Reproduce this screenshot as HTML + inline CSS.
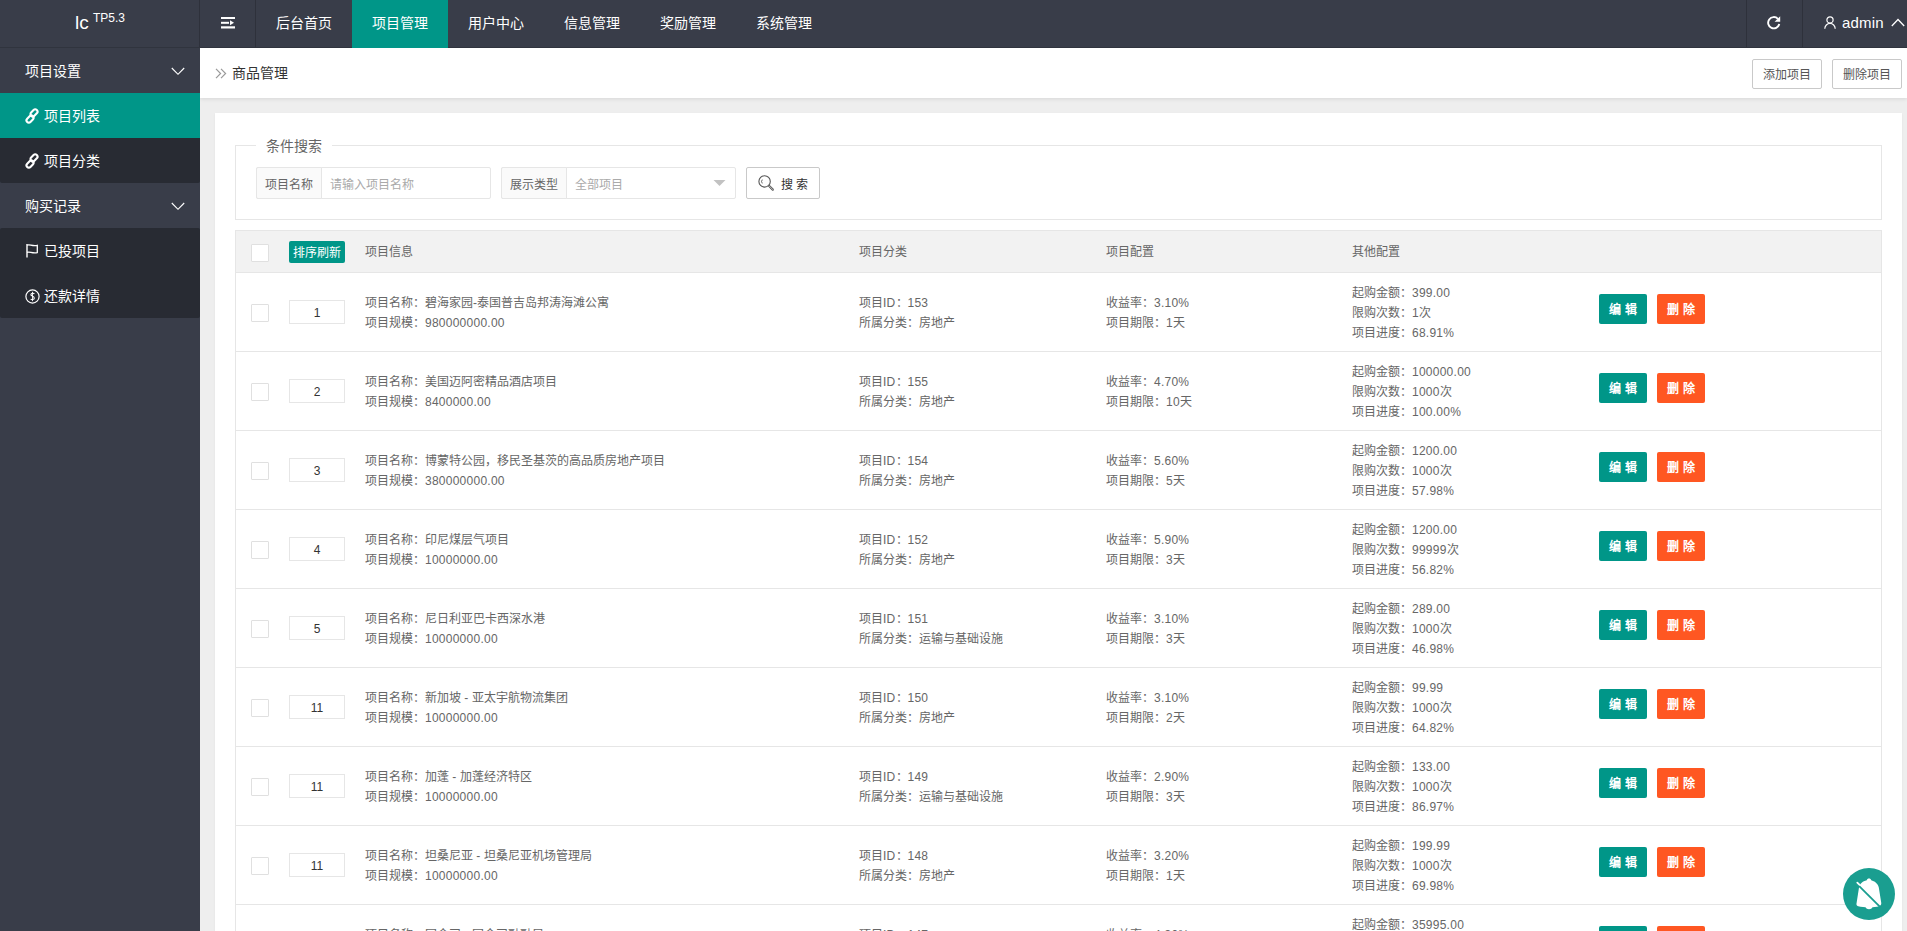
<!DOCTYPE html><html lang="zh-CN"><head><meta charset="utf-8"><title>admin</title><style>
*{box-sizing:border-box}
html,body{margin:0;padding:0}
body{width:1907px;height:931px;overflow:hidden;position:relative;background:#eeeeee;font-family:"Liberation Sans",sans-serif;color:#666}
.a{position:absolute}
.t{position:absolute;white-space:nowrap;line-height:20px}
.hdr{left:0;top:0;width:1907px;height:48px;background:#393d49}
.hl{position:absolute;top:0;width:1px;height:47px;background:#2e313b}
.nav{position:absolute;top:0;height:47px;line-height:47px;font-size:14px;color:#fff;text-align:center;width:96px}
.side{left:0;top:48px;width:200px;height:883px;background:#393d49}
.mi{position:absolute;left:0;width:200px;height:45px;line-height:45px;font-size:14px;color:#fff}
.child{position:absolute;left:0;width:200px;background:#282b33;border-radius:2px}
.cb{position:absolute;width:18px;height:18px;border:1px solid #e0e0e0;background:#fff;border-radius:1px}
.sort{position:absolute;width:56px;height:24px;border:1px solid #e6e6e6;background:#fff;font-size:12px;color:#333;text-align:center;line-height:24px}
.cell{position:absolute;font-size:12px;color:#666;line-height:20px;white-space:nowrap}
.btn{position:absolute;width:48px;height:30px;line-height:30px;font-size:12px;color:#fff;text-align:center;border-radius:2px;font-weight:bold}
.n{letter-spacing:0.25px}
.hline{position:absolute;left:235px;width:1647px;height:1px;background:#e6e6e6}
</style></head><body>
<div class="a" style="left:200px;top:48px;width:1707px;height:50px;background:#fff;box-shadow:0 1px 4px rgba(0,0,0,.1)"></div>
<div class="a" style="left:215px;top:113px;width:1687px;height:830px;background:#fff;box-shadow:0 1px 2px rgba(0,0,0,.06)"></div>
<svg class="a" style="left:215px;top:68px" width="12" height="11" viewBox="0 0 12 11"><path d="M1 0.8 L5.6 5.5 L1 10.2 M6 0.8 L10.6 5.5 L6 10.2" fill="none" stroke="#999" stroke-width="1.2"/></svg>
<div class="t" style="left:232px;top:63px;font-size:14px;color:#333">商品管理</div>
<div class="a" style="left:1752px;top:59px;width:70px;height:30px;border:1px solid #c9c9c9;border-radius:2px;background:#fff;font-size:12px;color:#555;text-align:center;line-height:30px">添加项目</div>
<div class="a" style="left:1832px;top:59px;width:70px;height:30px;border:1px solid #c9c9c9;border-radius:2px;background:#fff;font-size:12px;color:#555;text-align:center;line-height:30px">删除项目</div>
<div class="a" style="left:235px;top:145px;width:1647px;height:75px;border:1px solid #e6e6e6"></div>
<div class="a" style="left:256px;top:140px;width:76px;height:10px;background:#fff"></div>
<div class="t" style="left:266px;top:136px;font-size:14px;color:#666">条件搜索</div>
<div class="a" style="left:256px;top:167px;width:235px;height:32px;border:1px solid #e6e6e6;border-radius:2px;background:#fff"></div>
<div class="a" style="left:256px;top:167px;width:66px;height:32px;border:1px solid #e6e6e6;border-radius:2px 0 0 2px;background:#fafafa"></div>
<div class="t" style="left:265px;top:175px;font-size:12px;color:#666">项目名称</div>
<div class="t" style="left:330px;top:175px;font-size:12px;color:#aaa">请输入项目名称</div>
<div class="a" style="left:501px;top:167px;width:235px;height:32px;border:1px solid #e6e6e6;border-radius:2px;background:#fff"></div>
<div class="a" style="left:501px;top:167px;width:66px;height:32px;border:1px solid #e6e6e6;border-radius:2px 0 0 2px;background:#fafafa"></div>
<div class="t" style="left:510px;top:175px;font-size:12px;color:#666">展示类型</div>
<div class="t" style="left:575px;top:175px;font-size:12px;color:#aaa">全部项目</div>
<svg class="a" style="left:713px;top:179px" width="13" height="8" viewBox="0 0 13 8"><path d="M0.5 1 L12.5 1 L6.5 7 Z" fill="#c2c2c2"/></svg>
<div class="a" style="left:746px;top:167px;width:74px;height:32px;border:1px solid #c9c9c9;border-radius:2px;background:#fff"></div>
<svg class="a" style="left:757px;top:174px" width="18" height="18" viewBox="0 0 18 18"><circle cx="7.6" cy="7.4" r="5.7" fill="none" stroke="#555" stroke-width="1.1"/><path d="M12.2 12 L15.8 15.6" stroke="#555" stroke-width="2.2" stroke-linecap="round"/><path d="M12.2 12 L15.8 15.6" stroke="#fff" stroke-width="0.6" stroke-linecap="round"/><path d="M5.3 5.6 A3 3 0 0 0 5.3 9.4" fill="none" stroke="#555" stroke-width="0.9"/></svg>
<div class="t" style="left:781px;top:174.5px;font-size:12px;color:#333;letter-spacing:0px">搜&nbsp;索</div>
<div class="a" style="left:235px;top:230px;width:1647px;height:720px;border:1px solid #e6e6e6;border-bottom:none"></div>
<div class="a" style="left:236px;top:231px;width:1645px;height:41px;background:#f2f2f2"></div>
<div class="hline" style="top:272px"></div>
<div class="cb" style="left:251px;top:244px"></div>
<div class="a" style="left:289px;top:241px;width:56px;height:22px;background:#009688;border-radius:2px;color:#fff;font-size:12px;line-height:24px;text-align:center">排序刷新</div>
<div class="cell" style="left:365px;top:242px;color:#666">项目信息</div>
<div class="cell" style="left:859px;top:242px;color:#666">项目分类</div>
<div class="cell" style="left:1106px;top:242px;color:#666">项目配置</div>
<div class="cell" style="left:1352px;top:242px;color:#666">其他配置</div>
<div class="cb" style="left:251px;top:304px"></div>
<div class="sort" style="left:289px;top:300px">1</div>
<div class="cell" style="left:365px;top:293px">项目名称：碧海家园-泰国普吉岛邦涛海滩公寓<br>项目规模：<span class="n">980000000.00</span></div>
<div class="cell" style="left:859px;top:293px">项目<span class="n">ID</span>：<span class="n">153</span><br>所属分类：房地产</div>
<div class="cell" style="left:1106px;top:293px">收益率：<span class="n">3.10%</span><br>项目期限：<span class="n">1</span>天</div>
<div class="cell" style="left:1352px;top:283px">起购金额：<span class="n">399.00</span><br>限购次数：<span class="n">1</span>次<br>项目进度：<span class="n">68.91%</span></div>
<div class="btn" style="left:1599px;top:294px;background:#009688;padding-top:1px">编&nbsp;辑</div>
<div class="btn" style="left:1657px;top:294px;background:#ff5722;padding-top:1px">删&nbsp;除</div>
<div class="hline" style="top:351px"></div>
<div class="cb" style="left:251px;top:383px"></div>
<div class="sort" style="left:289px;top:379px">2</div>
<div class="cell" style="left:365px;top:372px">项目名称：美国迈阿密精品酒店项目<br>项目规模：<span class="n">8400000.00</span></div>
<div class="cell" style="left:859px;top:372px">项目<span class="n">ID</span>：<span class="n">155</span><br>所属分类：房地产</div>
<div class="cell" style="left:1106px;top:372px">收益率：<span class="n">4.70%</span><br>项目期限：<span class="n">10</span>天</div>
<div class="cell" style="left:1352px;top:362px">起购金额：<span class="n">100000.00</span><br>限购次数：<span class="n">1000</span>次<br>项目进度：<span class="n">100.00%</span></div>
<div class="btn" style="left:1599px;top:373px;background:#009688;padding-top:1px">编&nbsp;辑</div>
<div class="btn" style="left:1657px;top:373px;background:#ff5722;padding-top:1px">删&nbsp;除</div>
<div class="hline" style="top:430px"></div>
<div class="cb" style="left:251px;top:462px"></div>
<div class="sort" style="left:289px;top:458px">3</div>
<div class="cell" style="left:365px;top:451px">项目名称：博蒙特公园，移民圣基茨的高品质房地产项目<br>项目规模：<span class="n">380000000.00</span></div>
<div class="cell" style="left:859px;top:451px">项目<span class="n">ID</span>：<span class="n">154</span><br>所属分类：房地产</div>
<div class="cell" style="left:1106px;top:451px">收益率：<span class="n">5.60%</span><br>项目期限：<span class="n">5</span>天</div>
<div class="cell" style="left:1352px;top:441px">起购金额：<span class="n">1200.00</span><br>限购次数：<span class="n">1000</span>次<br>项目进度：<span class="n">57.98%</span></div>
<div class="btn" style="left:1599px;top:452px;background:#009688;padding-top:1px">编&nbsp;辑</div>
<div class="btn" style="left:1657px;top:452px;background:#ff5722;padding-top:1px">删&nbsp;除</div>
<div class="hline" style="top:509px"></div>
<div class="cb" style="left:251px;top:541px"></div>
<div class="sort" style="left:289px;top:537px">4</div>
<div class="cell" style="left:365px;top:530px">项目名称：印尼煤层气项目<br>项目规模：<span class="n">10000000.00</span></div>
<div class="cell" style="left:859px;top:530px">项目<span class="n">ID</span>：<span class="n">152</span><br>所属分类：房地产</div>
<div class="cell" style="left:1106px;top:530px">收益率：<span class="n">5.90%</span><br>项目期限：<span class="n">3</span>天</div>
<div class="cell" style="left:1352px;top:520px">起购金额：<span class="n">1200.00</span><br>限购次数：<span class="n">99999</span>次<br>项目进度：<span class="n">56.82%</span></div>
<div class="btn" style="left:1599px;top:531px;background:#009688;padding-top:1px">编&nbsp;辑</div>
<div class="btn" style="left:1657px;top:531px;background:#ff5722;padding-top:1px">删&nbsp;除</div>
<div class="hline" style="top:588px"></div>
<div class="cb" style="left:251px;top:620px"></div>
<div class="sort" style="left:289px;top:616px">5</div>
<div class="cell" style="left:365px;top:609px">项目名称：尼日利亚巴卡西深水港<br>项目规模：<span class="n">10000000.00</span></div>
<div class="cell" style="left:859px;top:609px">项目<span class="n">ID</span>：<span class="n">151</span><br>所属分类：运输与基础设施</div>
<div class="cell" style="left:1106px;top:609px">收益率：<span class="n">3.10%</span><br>项目期限：<span class="n">3</span>天</div>
<div class="cell" style="left:1352px;top:599px">起购金额：<span class="n">289.00</span><br>限购次数：<span class="n">1000</span>次<br>项目进度：<span class="n">46.98%</span></div>
<div class="btn" style="left:1599px;top:610px;background:#009688;padding-top:1px">编&nbsp;辑</div>
<div class="btn" style="left:1657px;top:610px;background:#ff5722;padding-top:1px">删&nbsp;除</div>
<div class="hline" style="top:667px"></div>
<div class="cb" style="left:251px;top:699px"></div>
<div class="sort" style="left:289px;top:695px">11</div>
<div class="cell" style="left:365px;top:688px">项目名称：新加坡 - 亚太宇航物流集团<br>项目规模：<span class="n">10000000.00</span></div>
<div class="cell" style="left:859px;top:688px">项目<span class="n">ID</span>：<span class="n">150</span><br>所属分类：房地产</div>
<div class="cell" style="left:1106px;top:688px">收益率：<span class="n">3.10%</span><br>项目期限：<span class="n">2</span>天</div>
<div class="cell" style="left:1352px;top:678px">起购金额：<span class="n">99.99</span><br>限购次数：<span class="n">1000</span>次<br>项目进度：<span class="n">64.82%</span></div>
<div class="btn" style="left:1599px;top:689px;background:#009688;padding-top:1px">编&nbsp;辑</div>
<div class="btn" style="left:1657px;top:689px;background:#ff5722;padding-top:1px">删&nbsp;除</div>
<div class="hline" style="top:746px"></div>
<div class="cb" style="left:251px;top:778px"></div>
<div class="sort" style="left:289px;top:774px">11</div>
<div class="cell" style="left:365px;top:767px">项目名称：加蓬 - 加蓬经济特区<br>项目规模：<span class="n">10000000.00</span></div>
<div class="cell" style="left:859px;top:767px">项目<span class="n">ID</span>：<span class="n">149</span><br>所属分类：运输与基础设施</div>
<div class="cell" style="left:1106px;top:767px">收益率：<span class="n">2.90%</span><br>项目期限：<span class="n">3</span>天</div>
<div class="cell" style="left:1352px;top:757px">起购金额：<span class="n">133.00</span><br>限购次数：<span class="n">1000</span>次<br>项目进度：<span class="n">86.97%</span></div>
<div class="btn" style="left:1599px;top:768px;background:#009688;padding-top:1px">编&nbsp;辑</div>
<div class="btn" style="left:1657px;top:768px;background:#ff5722;padding-top:1px">删&nbsp;除</div>
<div class="hline" style="top:825px"></div>
<div class="cb" style="left:251px;top:857px"></div>
<div class="sort" style="left:289px;top:853px">11</div>
<div class="cell" style="left:365px;top:846px">项目名称：坦桑尼亚 - 坦桑尼亚机场管理局<br>项目规模：<span class="n">10000000.00</span></div>
<div class="cell" style="left:859px;top:846px">项目<span class="n">ID</span>：<span class="n">148</span><br>所属分类：房地产</div>
<div class="cell" style="left:1106px;top:846px">收益率：<span class="n">3.20%</span><br>项目期限：<span class="n">1</span>天</div>
<div class="cell" style="left:1352px;top:836px">起购金额：<span class="n">199.99</span><br>限购次数：<span class="n">1000</span>次<br>项目进度：<span class="n">69.98%</span></div>
<div class="btn" style="left:1599px;top:847px;background:#009688;padding-top:1px">编&nbsp;辑</div>
<div class="btn" style="left:1657px;top:847px;background:#ff5722;padding-top:1px">删&nbsp;除</div>
<div class="hline" style="top:904px"></div>
<div class="cb" style="left:251px;top:936px"></div>
<div class="sort" style="left:289px;top:932px">11</div>
<div class="cell" style="left:365px;top:925px">项目名称：国金司 - 国金司融融局<br>项目规模：<span class="n">10000000.00</span></div>
<div class="cell" style="left:859px;top:925px">项目<span class="n">ID</span>：<span class="n">147</span><br>所属分类：房地产</div>
<div class="cell" style="left:1106px;top:925px">收益率：<span class="n">4.30%</span><br>项目期限：<span class="n">3</span>天</div>
<div class="cell" style="left:1352px;top:915px">起购金额：<span class="n">35995.00</span><br>限购次数：<span class="n">1000</span>次<br>项目进度：<span class="n">50.00%</span></div>
<div class="btn" style="left:1599px;top:926px;background:#009688;padding-top:1px">编&nbsp;辑</div>
<div class="btn" style="left:1657px;top:926px;background:#ff5722;padding-top:1px">删&nbsp;除</div>
<div class="a hdr"></div>
<div class="a" style="left:0;top:47px;width:1907px;height:1px;background:#30343e"></div>
<div class="hl" style="left:199px"></div>
<div class="hl" style="left:255px"></div>
<div class="hl" style="left:1746px"></div>
<div class="hl" style="left:1802px"></div>
<div class="t" style="left:75px;top:11px;font-size:19px;color:#fff;line-height:24px">lc</div>
<div class="t" style="left:93px;top:10px;font-size:12px;color:#fff;line-height:16px">TP5.3</div>
<svg class="a" style="left:221px;top:17px" width="15" height="12" viewBox="0 0 15 12"><rect x="0" y="0" width="14" height="2" fill="#fff"/><rect x="0" y="4.8" width="8" height="2" fill="#fff"/><path d="M9 3.3 L13 5.8 L9 8.3 Z" fill="#fff"/><rect x="0" y="9.3" width="14" height="2.2" fill="#fff"/></svg>
<div class="nav" style="left:256px;">后台首页</div>
<div class="nav" style="left:352px;background:#009688;height:48px;">项目管理</div>
<div class="nav" style="left:448px;">用户中心</div>
<div class="nav" style="left:544px;">信息管理</div>
<div class="nav" style="left:640px;">奖励管理</div>
<div class="nav" style="left:736px;">系统管理</div>
<svg class="a" style="left:1766px;top:15px" width="16" height="15" viewBox="0 0 16 15"><path d="M11.9 3.8 A5.65 5.65 0 1 0 13.3 9.1" fill="none" stroke="#fff" stroke-width="1.9"/><path d="M14.2 1.2 L14.2 6.8 L8.6 6.8 Z" fill="#fff"/></svg>
<svg class="a" style="left:1824px;top:16px" width="12" height="13" viewBox="0 0 12 13"><circle cx="6" cy="3.9" r="3.1" fill="none" stroke="#fff" stroke-width="1.2"/><path d="M0.8 12.8 A5.2 5.4 0 0 1 11.2 12.8" fill="none" stroke="#fff" stroke-width="1.2"/></svg>
<div class="t" style="left:1842px;top:13px;font-size:15px;letter-spacing:0.2px;color:#fff">admin</div>
<svg class="a" style="left:1891px;top:18px" width="14" height="9" viewBox="0 0 14 9"><path d="M0.8 8 L7 1.5 L13.2 8" fill="none" stroke="#fff" stroke-width="1.3"/></svg>
<div class="a side"></div>
<div class="mi" style="top:48px"><span style="position:absolute;top:1px;left:25px">项目设置</span></div>
<svg class="a" style="left:171px;top:67px" width="14" height="9" viewBox="0 0 14 9"><path d="M0.8 1 L7 7.3 L13.2 1" fill="none" stroke="#fff" stroke-width="1.15"/></svg>
<div class="child" style="top:93px;height:90px"></div>
<div class="mi" style="top:93px;background:#009688"></div>
<svg class="a" style="left:23.7px;top:107.8px" width="16" height="16" viewBox="0 0 16 16"><g transform="rotate(-45 8 8)" fill="none" stroke="#fff" stroke-width="2.1"><rect x="7.6" y="4.9" width="8" height="4.6" rx="2.3"/><rect x="0.4" y="6.5" width="8" height="4.6" rx="2.3"/></g></svg>
<div class="mi" style="top:93px;background:transparent"><span style="position:absolute;top:1px;left:44px">项目列表</span></div>
<svg class="a" style="left:23.7px;top:152.8px" width="16" height="16" viewBox="0 0 16 16"><g transform="rotate(-45 8 8)" fill="none" stroke="#fff" stroke-width="2.1"><rect x="7.6" y="4.9" width="8" height="4.6" rx="2.3"/><rect x="0.4" y="6.5" width="8" height="4.6" rx="2.3"/></g></svg>
<div class="mi" style="top:138px"><span style="position:absolute;top:1px;left:44px">项目分类</span></div>
<div class="mi" style="top:183px"><span style="position:absolute;top:1px;left:25px">购买记录</span></div>
<svg class="a" style="left:171px;top:202px" width="14" height="9" viewBox="0 0 14 9"><path d="M0.8 1 L7 7.3 L13.2 1" fill="none" stroke="#fff" stroke-width="1.15"/></svg>
<div class="child" style="top:228px;height:90px"></div>
<svg class="a" style="left:25px;top:243px" width="14" height="15" viewBox="0 0 14 15"><path d="M2 1 L2 14.5" stroke="#fff" stroke-width="1.4"/><path d="M2 2.2 C4.5 0.8 7 3.6 12.3 2.4 L12.3 9.6 C7 10.8 4.5 8 2 9.4" fill="none" stroke="#fff" stroke-width="1.3"/></svg>
<div class="mi" style="top:228px"><span style="position:absolute;top:1px;left:44px">已投项目</span></div>
<svg class="a" style="left:24.5px;top:288.5px" width="15" height="15" viewBox="0 0 15 15"><circle cx="7.5" cy="7.5" r="6.6" fill="none" stroke="#fff" stroke-width="1.2"/><path d="M9.4 4.9 C8.8 4.1 6.2 3.9 5.9 5.5 C5.6 7.2 9.4 7 9.3 9.2 C9.2 10.9 6.3 10.9 5.6 10" fill="none" stroke="#fff" stroke-width="1.1"/><path d="M7.5 2.8 L7.5 12.2" stroke="#fff" stroke-width="0.9"/></svg>
<div class="mi" style="top:273px"><span style="position:absolute;top:1px;left:44px">还款详情</span></div>
<svg class="a" style="left:1843px;top:868px" width="52" height="52" viewBox="0 0 52 52"><circle cx="26" cy="26" r="26" fill="#1a9e90"/><path d="M26 10.6 C27.2 10.6 28 11.3 28.2 12.2 C31.5 13 35 15.5 35.8 19.5 L38.2 34.5 C38.6 36.5 37.5 38.6 34 38.7 L29.5 39.3 C29 40.5 27.5 41.2 26 41.2 C24.5 41.2 23 40.5 22.5 39.3 L17.5 38.7 C14 38.5 13 36.8 13.6 35 L15.9 20.2 C16.5 16 19.5 13.3 23.8 12.3 C24 11.3 24.8 10.6 26 10.6 Z" fill="#fff"/><path d="M14.9 16.8 L36.8 38.7" stroke="#1a9e90" stroke-width="1.8"/><path d="M14.3 14.6 L16.6 16.9" stroke="#fff" stroke-width="1.8" stroke-linecap="round"/></svg>
</body></html>
